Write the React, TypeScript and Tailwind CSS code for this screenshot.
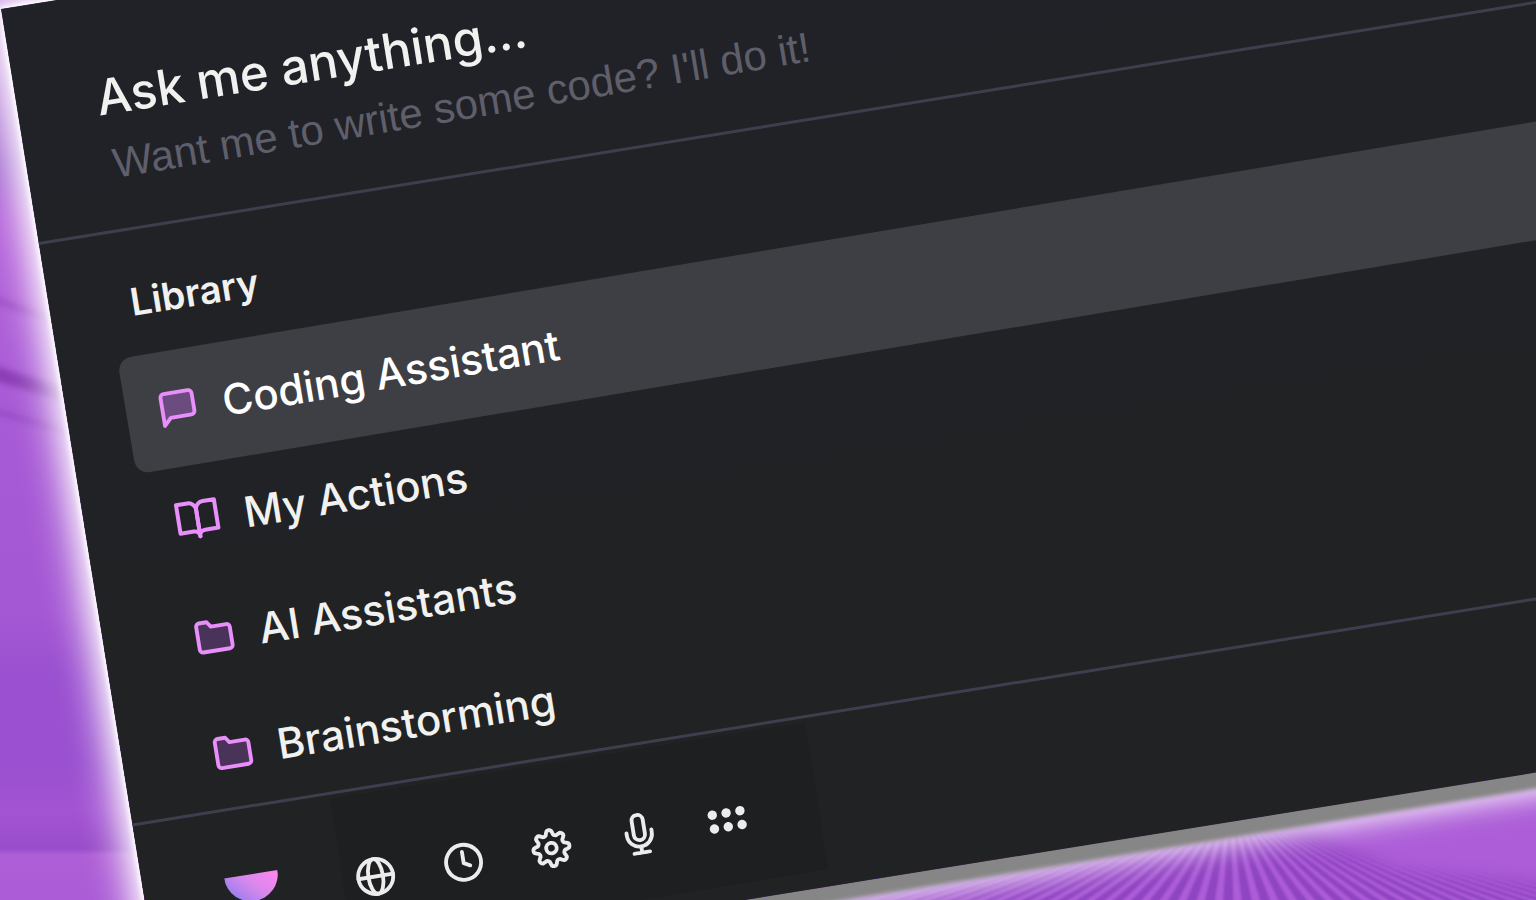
import { useId } from "react";
import type { ReactNode } from "react";

const stroke = {
  fill: "none",
  stroke: "currentColor",
  strokeLinecap: "round" as const,
  strokeLinejoin: "round" as const,
  viewBox: "0 0 24 24",
  "aria-hidden": true,
};

function ChatIcon() {
  return (
    <svg {...stroke} strokeWidth={2.2} className="size-[42px]">
      <path
        d="M21 14.500a2 2 0 0 1-2 2H7l-4 4V4.500a2 2 0 0 1 2-2h14a2 2 0 0 1 2 2z"
        fill="#6b4c7e"
      />
    </svg>
  );
}

function BookIcon() {
  return (
    <svg {...stroke} strokeWidth={2.1} className="size-[46px]">
      <path d="M2 2.500h6a4 4 0 0 1 4 4v14a3 3 0 0 0-3-3H2z" />
      <path d="M22 2.500h-6a4 4 0 0 0-4 4v14a3 3 0 0 1 3-3h7z" />
    </svg>
  );
}

function FolderIcon() {
  return (
    <svg {...stroke} strokeWidth={2.2} className="size-[42px]">
      <path
        d="M21.5 18.500a1.800 1.800 0 0 1-1.800 1.800H4.300a1.800 1.800 0 0 1-1.800-1.800V5.300a1.800 1.800 0 0 1 1.800-1.800h4.500l2 2.800h8.900a1.800 1.800 0 0 1 1.800 1.800z"
        fill="#4a3358"
      />
    </svg>
  );
}

function GlobeIcon() {
  return (
    <svg {...stroke} strokeWidth={2.2} className="size-[42px]">
      <circle cx="12" cy="12" r="10" />
      <path d="M2 12h20" />
      <ellipse cx="12" cy="12" rx="4.200" ry="10" />
    </svg>
  );
}

function ClockIcon() {
  return (
    <svg {...stroke} strokeWidth={2.2} className="size-[42px]">
      <circle cx="12" cy="12" r="10" />
      <path d="M12 6v6.500l3.500 1.800" />
    </svg>
  );
}

function gearPath() {
  const steps = 96;
  const points: string[] = [];
  for (let i = 0; i < steps; i++) {
    const a = (i / steps) * Math.PI * 2;
    const wave = Math.cos(8 * a);
    const r = 9 + 1.5 * Math.tanh(1.6 * wave);
    points.push(
      `${(12 + r * Math.sin(a)).toFixed(2)} ${(12 - r * Math.cos(a)).toFixed(2)}`
    );
  }
  return `M${points.join("L")}Z`;
}

function GearIcon() {
  return (
    <svg {...stroke} strokeWidth={2.2} className="size-[42px]">
      <path d={gearPath()} />
      <circle cx="12" cy="12" r="3" />
    </svg>
  );
}

function MicIcon() {
  return (
    <svg {...stroke} strokeWidth={2.2} className="size-[42px]">
      <rect x="8.800" y="1" width="6.400" height="14.500" rx="3.200" />
      <path d="M4.800 10.500v1.500a7.200 7.200 0 0 0 14.400 0v-1.500" />
      <path d="M12 19.300v3.200M7.500 22.800h9" />
    </svg>
  );
}

function GridIcon() {
  return (
    <svg viewBox="0 0 24 24" fill="currentColor" aria-hidden className="size-[42px]">
      {[4, 12, 20].map((x) =>
        [8, 16].map((y) => <circle key={`${x}-${y}`} cx={x} cy={y} r="2.700" />)
      )}
    </svg>
  );
}

function Logo() {
  const id = useId();
  return (
    <svg viewBox="0 0 54 54" className="size-[54px]" role="img" aria-label="Assistant">
      <defs>
        <linearGradient id={id} x1="0" y1="0.700" x2="1" y2="0.200">
          <stop offset="0" stopColor="#8f7cf0" />
          <stop offset="0.500" stopColor="#d588ec" />
          <stop offset="1" stopColor="#fb86ee" />
        </linearGradient>
      </defs>
      <path d="M0 27h54a27 27 0 0 1-54 0z" fill={`url(#${id})`} />
    </svg>
  );
}

function Backdrop() {
  const rays: number[] = [];
  for (let x = -4200; x <= 7400; x += 110) rays.push(x);
  return (
    <svg
      viewBox="0 0 1536 900"
      preserveAspectRatio="xMidYMax slice"
      className="absolute inset-0 size-full"
      aria-hidden
    >
      <defs>
        <linearGradient id="sky" x1="0" y1="0" x2="0" y2="1">
          <stop offset="0" stopColor="#c58ae0" />
          <stop offset="0.180" stopColor="#a46ad0" />
          <stop offset="0.250" stopColor="#b563da" />
          <stop offset="0.450" stopColor="#a85bd6" />
          <stop offset="0.680" stopColor="#a558d4" />
          <stop offset="0.750" stopColor="#9a50d0" />
          <stop offset="0.850" stopColor="#9a50d0" />
          <stop offset="0.900" stopColor="#a354d2" />
          <stop offset="0.943" stopColor="#9a4dca" />
          <stop offset="0.950" stopColor="#ae5fd6" />
          <stop offset="1" stopColor="#ab5cd6" />
        </linearGradient>
        <filter id="soft" x="-20%" y="-50%" width="140%" height="200%">
          <feGaussianBlur stdDeviation="3" />
        </filter>
        <filter id="faint">
          <feGaussianBlur stdDeviation="1" />
        </filter>
        <filter id="edge" x="-10%" y="-20%" width="120%" height="140%">
          <feGaussianBlur stdDeviation="7" />
        </filter>
        <mask id="floor">
          <path
            d="M700 790H1270L1330 840L1400 868L1560 882V940H700z"
            fill="#ffffff"
            filter="url(#edge)"
          />
        </mask>
      </defs>
      <rect width="1536" height="900" fill="url(#sky)" />
      <g filter="url(#soft)" fill="none" stroke="#8336ad">
        <path d="M-10 298L60 322" strokeWidth="7" strokeOpacity="0.450" />
        <path d="M-10 372L70 396" strokeWidth="14" strokeOpacity="0.800" />
        <path d="M-10 410L70 432" strokeWidth="4" strokeOpacity="0.600" />
      </g>
      <rect x="700" y="740" width="836" height="160" fill="#ad5dd8" />
      <g mask="url(#floor)">
        <g filter="url(#faint)">
          {rays.map((x) => (
            <path
              key={x}
              d={`M1230 800L${x} 1400L${x + 60} 1400z`}
              fill="#8940bd"
              fillOpacity="0.850"
            />
          ))}
        </g>
      </g>
    </svg>
  );
}

const library: { label: string; icon: ReactNode }[] = [
  { label: "My Actions", icon: <BookIcon /> },
  { label: "AI Assistants", icon: <FolderIcon /> },
  { label: "Brainstorming", icon: <FolderIcon /> },
];

const tools: { label: string; icon: ReactNode }[] = [
  { label: "Browse", icon: <GlobeIcon /> },
  { label: "History", icon: <ClockIcon /> },
  { label: "Settings", icon: <GearIcon /> },
  { label: "Voice", icon: <MicIcon /> },
  { label: "Apps", icon: <GridIcon /> },
];

function Row({ icon, label }: { icon: ReactNode; label: string }) {
  return (
    <span className="flex h-[117px] items-center gap-6 pl-[31px]">
      <span className="text-[#e88ffb]">{icon}</span>
      <span>{label}</span>
    </span>
  );
}

export default function App() {
  return (
    <main className="relative h-screen overflow-hidden bg-[#a85bd6] font-['Inter',sans-serif] text-[#f1f1ef]">
      <Backdrop />
      <section className="relative mt-[9px] ml-px w-[130vw] origin-top-left rotate-[-9.150deg] bg-linear-to-b from-[#212228] via-[#212225] to-[#212224] shadow-[0_20px_4px_-4px_#868686,0_0_5px_2px_#ffffff,0_0_38px_12px_#ffffff,0_20px_24px_0_#ffffff77]">
        <header className="flex h-[239px] flex-col items-start border-b-3 border-[#3f3e4e] pt-[76px] pl-[80px]">
          <label htmlFor="prompt" className="text-[49px] leading-[56px] font-medium">
            Ask me anything...
          </label>
          <input
            id="prompt"
            type="text"
            placeholder="Want me to write some code? I'll do it!"
            className="mt-2 ml-1.5 h-[60px] w-1/2 origin-left rotate-[-0.400deg] bg-transparent font-['Liberation_Sans',sans-serif] text-[42px] outline-none placeholder:text-[#5f5f6b] placeholder:opacity-100"
          />
        </header>

        <nav aria-label="Library" className="h-[589px] border-b-3 border-[#3f3e4e] pt-[47px] pl-[59px]">
          <h2 className="pl-[22px] text-[38px] leading-[48px] font-semibold">Library</h2>
          <ul className="mt-[30px] text-[42px] leading-[56px] font-medium">
            <li className="-mb-1">
              <a
                href="#coding"
                className="block origin-top-left rotate-[-0.350deg] rounded-[14px] bg-[#3e3f44] text-white"
              >
                <Row icon={<ChatIcon />} label="Coding Assistant" />
              </a>
            </li>
            {library.map((item) => (
              <li key={item.label}>
                <a href="#library" className="block">
                  <Row icon={item.icon} label={item.label} />
                </a>
              </li>
            ))}
          </ul>
        </nav>

        <footer className="flex h-[170px] items-start pl-[82px]">
          <div className="mt-[39px]">
            <Logo />
          </div>
          <div className="mt-1 ml-[63px] flex h-[149px] items-center rounded bg-[#1e1f21] pt-[18px] pr-6 pl-[12px]">
            {tools.map((tool) => (
              <button
                key={tool.label}
                type="button"
                aria-label={tool.label}
                className="flex w-[89px] justify-start text-[#ececec]"
              >
                {tool.icon}
              </button>
            ))}
          </div>
        </footer>
      </section>
    </main>
  );
}
